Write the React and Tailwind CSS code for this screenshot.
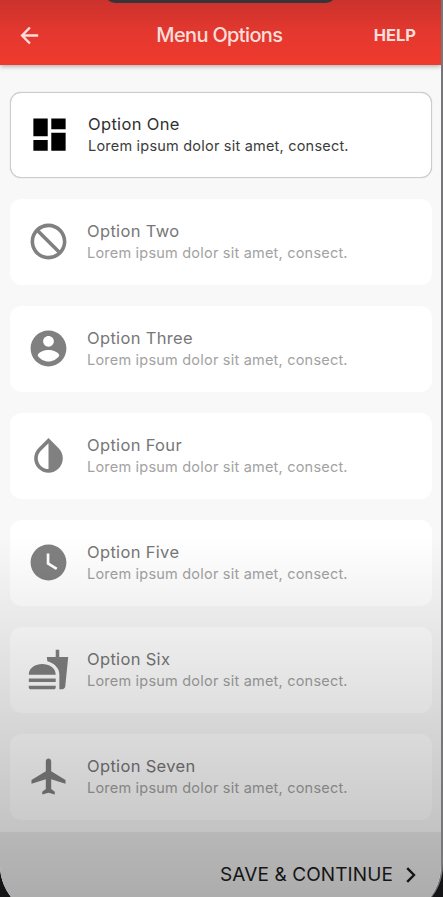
import React from "react";
import { MdDashboard, MdNotInterested, MdWatchLater } from "react-icons/md";

const icon = (d) =>
  function Icon({ className }) {
    return (
      <svg viewBox="0 0 24 24" fill="currentColor" className={className}>
        <path d={d} />
      </svg>
    );
  };

const Account = icon(
  "M12 2C6.48 2 2 6.48 2 12s4.48 10 10 10 10-4.48 10-10S17.52 2 12 2zm0 3c1.66 0 3 1.34 3 3s-1.34 3-3 3-3-1.34-3-3 1.34-3 3-3zm0 14.2c-2.5 0-4.71-1.28-6-3.22.03-1.99 4-3.08 6-3.08 1.99 0 5.97 1.09 6 3.08-1.29 1.94-3.5 3.22-6 3.22z"
);
const Drop = icon(
  "M17.66 7.93L12 2.27 6.34 7.93c-3.12 3.12-3.12 8.19 0 11.31C7.9 20.8 9.95 21.58 12 21.58c2.05 0 4.1-.78 5.66-2.34 3.12-3.12 3.12-8.19 0-11.31zM12 19.59c-1.6 0-3.11-.62-4.24-1.76C6.62 16.69 6 15.19 6 13.59s.62-3.11 1.76-4.24L12 5.1v14.49z"
);
const Food = icon(
  "M18.06 22.99h1.66c.84 0 1.53-.64 1.63-1.46L23 5.05h-5V1h-1.97v4.05h-4.97l.3 2.34c1.71.47 3.31 1.32 4.27 2.26 1.44 1.42 2.43 2.89 2.43 5.29v8.05zM1 21.99V21h15.03v.99c0 .55-.45 1-1.01 1H2.01c-.56 0-1.01-.45-1.01-1zm15.03-7c0-8-15.03-8-15.03 0h15.03zM1.02 17h15v2h-15z"
);
const Plane = icon(
  "M21.5 16v-2l-8-5V3.5c0-.83-.67-1.5-1.5-1.5s-1.5.67-1.5 1.5V9l-8 5v2l8-2.5V19l-2 1.5V22l3.5-1 3.5 1v-1.5l-2-1.5v-5.5l8 2.5z"
);

const options = [
  { name: "Option One", Icon: MdDashboard, active: true },
  { name: "Option Two", Icon: MdNotInterested },
  { name: "Option Three", Icon: Account },
  { name: "Option Four", Icon: Drop },
  { name: "Option Five", Icon: MdWatchLater },
  { name: "Option Six", Icon: Food },
  { name: "Option Seven", Icon: Plane },
];

function OptionCard({ name, Icon, active }) {
  return (
    <div
      className={
        "flex h-[86px] shrink-0 items-center rounded-[11px] border bg-white " +
        (active ? "border-[#cccccc] pl-[17px] shadow-[0_0_1px_rgba(0,0,0,0.25)]" : "border-white pl-[16px]")
      }
    >
      <Icon className={"mb-[1px] h-[43px] w-[43px] shrink-0 " + (active ? "text-black" : "text-[#808080]")} />
      <div className="ml-[17px]">
        <div
          className={
            "text-[16.5px] leading-[22px] tracking-[0.33px] " + (active ? "text-[#303030]" : "text-[#777777]")
          }
        >
          {name}
        </div>
        <div
          className={
            "text-[14.5px] leading-[21px] tracking-[0.21px] " + (active ? "text-[#3c3c3c]" : "text-[#a2a2a2]")
          }
        >
          Lorem ipsum dolor sit amet, consect.
        </div>
      </div>
    </div>
  );
}

export default function App() {
  return (
    <div className="h-[897px] w-[443px] overflow-hidden bg-[#141416] font-['Inter',sans-serif]">
      <div className="relative flex h-[917px] flex-col overflow-hidden rounded-b-[52px] border-r-2 border-[#77777b] bg-[#f8f8f8]">
        <header className="relative z-10 flex h-[65px] shrink-0 items-center justify-between bg-linear-to-b from-[#cb322c] via-[#e4382f] to-[#f03a2e] pt-[5px] pr-[25px] pl-[17px] text-[#fbdeda] shadow-[0_1px_5px_rgba(0,0,0,0.35)]">
          <svg viewBox="0 0 24 24" className="h-[25px] w-[25px]" fill="none" stroke="currentColor" strokeWidth="2.3">
            <path d="M20.3 12H5.4M12.4 4.3 4.9 12l7.5 7.7" />
          </svg>
          <h1 className="ml-[23px] text-[20px] font-medium tracking-[-0.65px]">Menu Options</h1>
          <span className="text-[16.5px] font-bold">HELP</span>
          <div className="absolute top-[-17px] left-[105px] h-[20px] w-[231px] rounded-[12px] bg-[#36343a]" />
        </header>
        <main className="flex h-[767px] shrink-0 flex-col gap-[21px] pt-[26.5px] pr-[9.5px] pl-[10px]">
          {options.map((o) => (
            <OptionCard key={o.name} {...o} />
          ))}
        </main>
        <footer className="flex h-[65px] shrink-0 items-center justify-end bg-[#e9e9e9] pt-[21px] pr-[25px] text-[#1c1c1c]">
          <span className="text-[19px] tracking-[0.1px]">SAVE &amp; CONTINUE</span>
          <svg viewBox="0 0 10 16" className="ml-[13px] h-[16px] w-[10px]" fill="none" stroke="currentColor" strokeWidth="2.4">
            <path d="M1.2 1.2 8 8l-6.8 6.8" />
          </svg>
        </footer>
        <div className="grow bg-[#e9e9e9]" />
        <div className="pointer-events-none absolute inset-x-0 bottom-[20px] h-[362px] bg-linear-to-b from-black/0 to-black/26" />
      </div>
    </div>
  );
}
